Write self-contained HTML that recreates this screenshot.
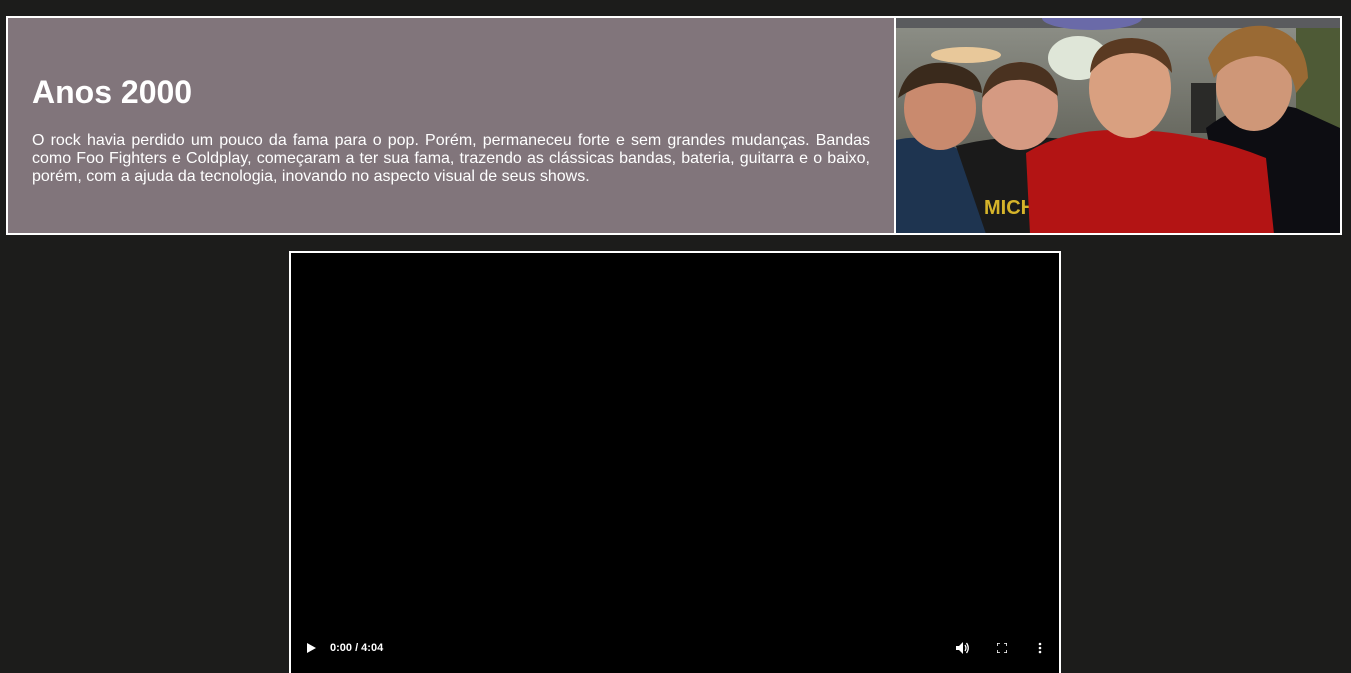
<!DOCTYPE html>
<html><head><meta charset="utf-8"><style>
html,body{margin:0;padding:0;background:#1c1c1b;width:1351px;height:656px;overflow:hidden;font-family:"Liberation Sans",Arial,sans-serif}
.box{position:absolute;left:6px;top:16px;width:1332px;height:215px;border:2px solid #fff;background:#81757b;display:flex}
.txt{width:888px;flex:none;box-sizing:border-box;padding:0 24px 0 24px;color:#fff;border-right:2px solid #fff}
h1{margin:55px 0 0;font-size:32px;font-weight:bold;line-height:38px}
p{margin:21px 0 0;font-size:16px;line-height:18px;text-align:justify}
.img{width:444px;height:215px;overflow:hidden;position:relative}
.vid{position:absolute;left:289px;top:251px;width:768px;height:420px;border:2px solid #fff;border-bottom:none;background:#000;color:#fff;font-size:11px;font-weight:bold}
</style></head><body>
<div class="box">
<div class="txt"><h1>Anos 2000</h1>
<p>O rock havia perdido um pouco da fama para o pop. Porém, permaneceu forte e sem grandes mudanças. Bandas como Foo Fighters e Coldplay, começaram a ter sua fama, trazendo as clássicas bandas, bateria, guitarra e o baixo, porém, com a ajuda da tecnologia, inovando no aspecto visual de seus shows.</p></div>
<div class="img"><svg width="444" height="216" viewBox="0 0 444 216">
<defs><linearGradient id="bg" x1="0" y1="0" x2="0" y2="1"><stop offset="0" stop-color="#8e9088"/><stop offset="1" stop-color="#4a4a40"/></linearGradient></defs>
<rect width="444" height="216" fill="url(#bg)"/>
<rect x="0" y="0" width="444" height="10" fill="#5a5b5e"/>
<ellipse cx="196" cy="0" rx="50" ry="12" fill="#6a6aa8"/>
<ellipse cx="182" cy="40" rx="30" ry="22" fill="#dfe6d8"/>
<ellipse cx="70" cy="37" rx="35" ry="8" fill="#e8c89a"/>
<rect x="400" y="10" width="44" height="110" fill="#4e5a36"/>
<rect x="295" y="65" width="25" height="50" fill="#2a2a28"/>
<path d="M0 122 Q30 115 60 130 L94 150 L100 216 L0 216Z" fill="#1e3450"/>
<ellipse cx="44" cy="90" rx="36" ry="42" fill="#c98a6e"/>
<path d="M2 80 Q10 42 50 45 Q85 50 86 75 L70 70 Q40 58 10 75Z" fill="#3a2a1c"/>
<path d="M60 128 Q120 112 200 125 L210 216 L90 216Z" fill="#1a1a1a"/>
<text x="88" y="196" font-family="Liberation Sans" font-weight="bold" font-size="20" fill="#d6b42a">MICH</text>
<ellipse cx="124" cy="88" rx="38" ry="44" fill="#d59a82"/>
<path d="M86 80 Q90 45 125 44 Q160 46 162 78 Q140 60 120 62 Q100 62 86 80Z" fill="#4a3220"/>
<path d="M310 110 Q350 78 400 90 L444 110 L444 216 L330 216Z" fill="#0d0d12"/>
<ellipse cx="358" cy="68" rx="38" ry="45" fill="#cf9778"/>
<path d="M312 40 Q330 5 370 8 Q410 15 412 60 L400 75 Q395 40 360 38 Q330 40 318 60Z" fill="#9a6a34"/>
<path d="M130 135 Q170 110 230 112 Q300 112 370 140 L378 216 L134 216Z" fill="#b31414"/>
<ellipse cx="234" cy="70" rx="41" ry="50" fill="#d9a080"/>
<path d="M194 55 Q196 20 236 20 Q275 22 276 55 Q260 35 236 35 Q210 35 194 55Z" fill="#5a3a22"/>
</svg></div>
</div>
<div class="vid">
<svg style="position:absolute;left:16px;top:390px" width="9" height="10"><path d="M0 0L9 5L0 10Z" fill="#fff"/></svg>
<span style="position:absolute;left:39px;top:389px">0:00 / 4:04</span>
<svg style="position:absolute;left:665px;top:389px" width="14" height="12" viewBox="0 0 14 12"><path d="M0 4H3L7 0V12L3 8H0Z" fill="#fff"/><path d="M9 3Q11 6 9 9M10.5 1Q14 6 10.5 11" stroke="#fff" stroke-width="1.3" fill="none"/></svg>
<svg style="position:absolute;left:706px;top:390px" width="10" height="10" viewBox="0 0 10 10"><path d="M0 3V0H3M7 0H10V3M10 7V10H7M3 10H0V7" stroke="#fff" stroke-width="1.6" fill="none"/></svg>
<svg style="position:absolute;left:747px;top:389px" width="4" height="12"><circle cx="2" cy="2" r="1.3" fill="#fff"/><circle cx="2" cy="6" r="1.3" fill="#fff"/><circle cx="2" cy="10" r="1.3" fill="#fff"/></svg>
</div>
</body></html>
